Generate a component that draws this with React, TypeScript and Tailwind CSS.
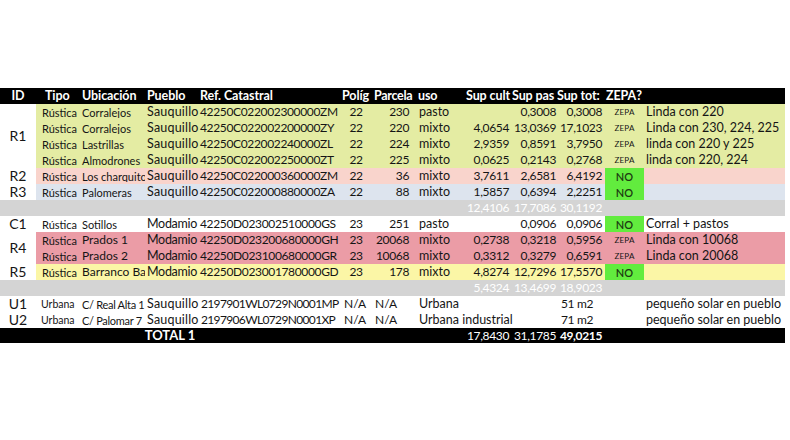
import React from "react";

type Row = {
  ubic: string;
  ubicCls?: string;
  pueblo: string;
  ref: string;
  polig: string;
  parcela: string;
  uso: string;
  cult?: string;
  pas?: string;
  tot?: string;
  zepa?: "ZEPA" | "NO";
  note?: string;
};

type Group = { id: string; bg: string; rows: Row[] };

const COLS = "grid grid-cols-[44px_65px_54px_141px_32px_42px_50px_48px_45px_48px_39px_141px]";
const FONT = { fontFamily: "Lato, 'Open Sans', sans-serif" };
// digits in Lato run wider than in the sheet's font, squeeze them a bit
const NUM = "text-[12px] tracking-[-0.35px] whitespace-nowrap";

const groups: Group[] = [
  {
    id: "R1",
    bg: "bg-[#e4eca3]",
    rows: [
      { ubic: "Corralejos", pueblo: "Sauquillo", ref: "42250C022002300000ZM", polig: "22", parcela: "230", uso: "pasto", pas: "0,3008", tot: "0,3008", zepa: "ZEPA", note: "Linda con 220" },
      { ubic: "Corralejos", pueblo: "Sauquillo", ref: "42250C022002200000ZY", polig: "22", parcela: "220", uso: "mixto", cult: "4,0654", pas: "13,0369", tot: "17,1023", zepa: "ZEPA", note: "Linda con 230, 224, 225" },
      { ubic: "Lastrillas", pueblo: "Sauquillo", ref: "42250C022002240000ZL", polig: "22", parcela: "224", uso: "mixto", cult: "2,9359", pas: "0,8591", tot: "3,7950", zepa: "ZEPA", note: "linda con 220 y 225" },
      { ubic: "Almodrones", pueblo: "Sauquillo", ref: "42250C022002250000ZT", polig: "22", parcela: "225", uso: "mixto", cult: "0,0625", pas: "0,2143", tot: "0,2768", zepa: "ZEPA", note: "linda con 220, 224" },
    ],
  },
  {
    id: "R2",
    bg: "bg-[#f9d4cc]",
    rows: [
      { ubic: "Los charquitos", pueblo: "Sauquillo", ref: "42250C022000360000ZM", polig: "22", parcela: "36", uso: "mixto", cult: "3,7611", pas: "2,6581", tot: "6,4192", zepa: "NO" },
    ],
  },
  {
    id: "R3",
    bg: "bg-[#dde4ee]",
    rows: [
      { ubic: "Palomeras", pueblo: "Sauquillo", ref: "42250C022000880000ZA", polig: "22", parcela: "88", uso: "mixto", cult: "1,5857", pas: "0,6394", tot: "2,2251", zepa: "NO" },
    ],
  },
];

const groups2: Group[] = [
  {
    id: "C1",
    bg: "bg-white",
    rows: [
      { ubic: "Sotillos", pueblo: "Modamio", ref: "42250D023002510000GS", polig: "23", parcela: "251", uso: "pasto", pas: "0,0906", tot: "0,0906", zepa: "NO", note: "Corral + pastos" },
    ],
  },
  {
    id: "R4",
    bg: "bg-[#eb9ca6]",
    rows: [
      { ubic: "Prados 1", ubicCls: "text-[12px]", pueblo: "Modamio", ref: "42250D023200680000GH", polig: "23", parcela: "20068", uso: "mixto", cult: "0,2738", pas: "0,3218", tot: "0,5956", zepa: "ZEPA", note: "Linda con 10068" },
      { ubic: "Prados 2", ubicCls: "text-[12px]", pueblo: "Modamio", ref: "42250D023100680000GR", polig: "23", parcela: "10068", uso: "mixto", cult: "0,3312", pas: "0,3279", tot: "0,6591", zepa: "ZEPA", note: "Linda con 20068" },
    ],
  },
  {
    id: "R5",
    bg: "bg-[#fbf6a6]",
    rows: [
      { ubic: "Barranco Bartolomé", ubicCls: "text-[12px]", pueblo: "Modamio", ref: "42250D023001780000GD", polig: "23", parcela: "178", uso: "mixto", cult: "4,8274", pas: "12,7296", tot: "17,5570", zepa: "NO" },
    ],
  },
];

function DataRow({ r, bg }: { r: Row; bg: string }) {
  return (
    <div className={`${COLS} h-[16px] items-center text-[12.5px] leading-none text-[#151515] ${bg}`}>
      <div className="pl-[6px] text-[11px] whitespace-nowrap overflow-hidden">Rústica</div>
      <div className={`pl-[2px] whitespace-nowrap overflow-hidden ${r.ubicCls ?? "text-[11px]"}`}>{r.ubic}</div>
      <div className={`pl-[2px] whitespace-nowrap overflow-hidden ${r.pueblo === "Modamio" ? "tracking-[-0.3px]" : "tracking-[0.2px]"}`}>
        {r.pueblo}
      </div>
      <div className={`pl-[1px] overflow-hidden ${NUM}`}>{r.ref}</div>
      <div className={`text-center ${NUM}`}>{r.polig}</div>
      <div className={`text-right pr-[5px] ${NUM}`}>{r.parcela}</div>
      <div className="pl-[5px]">{r.uso}</div>
      <div className={`text-right pr-[3px] ${NUM}`}>{r.cult}</div>
      <div className={`text-right pr-[1px] ${NUM}`}>{r.pas}</div>
      <div className={`text-right pr-[3px] ${NUM}`}>{r.tot}</div>
      {r.zepa === "NO" ? (
        <div className="h-full flex items-center justify-center bg-[#62ec3e] text-[11px] font-semibold text-[#1d3b12]">NO</div>
      ) : (
        <div className="text-center text-[8px] tracking-[0.2px]">{r.zepa}</div>
      )}
      <div className="pl-[2px] whitespace-nowrap overflow-hidden">{r.note}</div>
    </div>
  );
}

function GroupBlock({ g }: { g: Group }) {
  return (
    <div className="flex">
      <div className="w-[36px] flex items-center justify-center text-[14px] leading-none text-[#151515]">{g.id}</div>
      <div className="flex-1">
        {g.rows.map((r, i) => (
          <DataRow key={i} r={r} bg={g.bg} />
        ))}
      </div>
    </div>
  );
}

function SubtotalRow({ cult, pas, tot }: { cult: string; pas: string; tot: string }) {
  return (
    <div className={`flex h-[16px] items-center bg-[#d4d4d4] leading-none text-white ${NUM}`}>
      <div className="w-[464px]" />
      <div className="w-[48px] text-right pr-[3px]">{cult}</div>
      <div className="w-[45px] text-right pr-[1px]">{pas}</div>
      <div className="w-[48px] text-right pr-[3px]">{tot}</div>
    </div>
  );
}

const urbanRows = [
  { id: "U1", ubic: "C/ Real Alta 1", ref: "2197901WL0729N0001MP", uso: "Urbana", m2: "51 m2" },
  { id: "U2", ubic: "C/ Palomar 7", ref: "2197906WL0729N0001XP", uso: "Urbana industrial", m2: "71 m2" },
];

export default function App() {
  return (
    <div className="w-[790px] h-[440px] bg-white pt-[88px]" style={FONT}>
      <div className="w-[785px]">
        {/* header */}
        <div className="flex h-[16px] items-center bg-black text-white font-bold text-[12.5px] tracking-[-0.1px] leading-none">
          <div className="w-[36px] text-center">ID</div>
          <div className={`${COLS} flex-1`}>
            <div className="pl-[9px]">Tipo</div>
            <div className="pl-[2px] whitespace-nowrap">Ubicación</div>
            <div className="pl-[2px]">Pueblo</div>
            <div className="pl-[1px] whitespace-nowrap">Ref. Catastral</div>
            <div className="pl-[2px] whitespace-nowrap overflow-hidden">Políg</div>
            <div className="pl-[2px] whitespace-nowrap overflow-hidden tracking-[-0.3px]">Parcela</div>
            <div className="pl-[4px]">uso</div>
            <div className="pl-[2px] whitespace-nowrap overflow-hidden">Sup cult</div>
            <div className="whitespace-nowrap overflow-hidden">Sup pas</div>
            <div className="whitespace-nowrap overflow-hidden">Sup tot:</div>
            <div className="pl-[1px] whitespace-nowrap">ZEPA?</div>
            <div />
          </div>
        </div>

        {groups.map((g) => (
          <GroupBlock key={g.id} g={g} />
        ))}
        <SubtotalRow cult="12,4106" pas="17,7086" tot="30,1192" />

        {groups2.map((g) => (
          <GroupBlock key={g.id} g={g} />
        ))}
        <SubtotalRow cult="5,4324" pas="13,4699" tot="18,9023" />

        {urbanRows.map((u) => (
          <div key={u.id} className="flex h-[16px] items-center text-[12.5px] leading-none text-[#151515]">
            <div className="w-[36px] text-center text-[14px]">{u.id}</div>
            <div className={`${COLS} flex-1 items-center`}>
              <div className="pl-[5px] text-[10.5px]">Urbana</div>
              <div className="pl-[2px] text-[11px] tracking-[-0.3px] whitespace-nowrap overflow-hidden">{u.ubic}</div>
              <div className="pl-[2px] tracking-[0.2px]">Sauquillo</div>
              <div className="pl-[2px] overflow-hidden text-[12px] tracking-[-0.65px] whitespace-nowrap">{u.ref}</div>
              <div className="pl-[4px] text-[12px]">N/A</div>
              <div className="pl-[3px] text-[12px]">N/A</div>
              <div className="pl-[5px] whitespace-nowrap">{u.uso}</div>
              <div />
              <div />
              <div className={`pl-[4px] ${NUM}`}>{u.m2}</div>
              <div />
              <div className="pl-[2px] whitespace-nowrap">pequeño solar en pueblo</div>
            </div>
          </div>
        ))}

        {/* total */}
        <div className={`flex h-[15px] items-center bg-black text-white leading-none ${NUM}`}>
          <div className="w-[340px] text-center font-bold text-[13px] tracking-normal">TOTAL 1</div>
          <div className="w-[124px]" />
          <div className="w-[48px] text-right pr-[3px]">17,8430</div>
          <div className="w-[45px] text-right pr-[1px]">31,1785</div>
          <div className="w-[48px] text-right pr-[3px] font-bold">49,0215</div>
        </div>
      </div>
    </div>
  );
}
